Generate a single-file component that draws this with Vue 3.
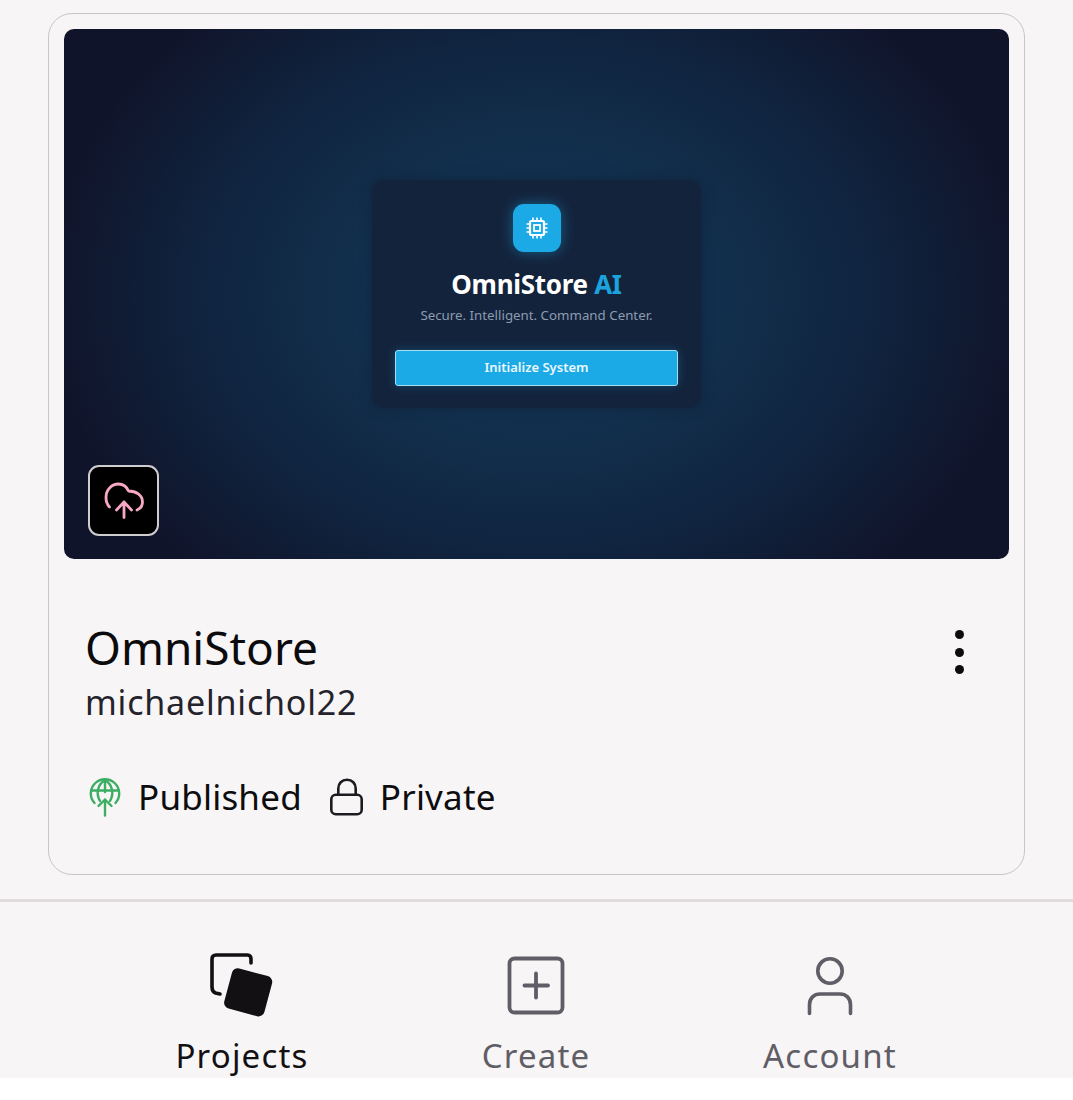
<template>
  <div class="screen">
    <main class="content">
      <section class="card">
        <div class="preview">
          <div class="panel">
            <div class="chip">
              <svg width="24" height="24" viewBox="0 0 24 24" fill="none" stroke="#fff" stroke-width="2.2">
                <rect x="5" y="5" width="14" height="14" rx="1.500" />
                <rect x="9" y="9" width="6" height="6" stroke-width="1.800" />
                <path d="M8 1.500v3M12 1.500v3M16 1.500v3M8 19.500v3M12 19.500v3M16 19.500v3M1.500 8h3M1.500 12h3M1.500 16h3M19.500 8h3M19.500 12h3M19.500 16h3" stroke-width="1.600" />
              </svg>
            </div>
            <h2 class="panel-title">OmniStore <span>AI</span></h2>
            <p class="panel-sub">Secure. Intelligent. Command Center.</p>
            <div class="panel-btn">Initialize System</div>
          </div>
          <button class="upload">
            <svg width="40" height="40" viewBox="0 0 40 40" fill="none" stroke="#f7a8c4" stroke-width="2.800" stroke-linecap="round" stroke-linejoin="round">
              <path d="M5.500 26C3 23.500 2 20 2 16.500C2 8.500 8 3 14.500 3C19 3 22.500 5.500 24.500 10C32 10 38.500 14 38.500 21C38.500 24.500 36.500 27.500 33 29" />
              <path d="M20 36.500V21M12.500 29L20 21L27.500 29" />
            </svg>
          </button>
        </div>

        <div class="info">
          <div class="info-text">
            <h1 class="name">OmniStore</h1>
            <p class="owner">michaelnichol22</p>
          </div>
          <button class="more" aria-label="More">
            <i></i><i></i><i></i>
          </button>
        </div>

        <div class="status">
          <div class="status-item">
            <svg width="36" height="40" viewBox="0 0 36 40" fill="none" stroke="#3cae63" stroke-width="2.400" stroke-linecap="round" stroke-linejoin="round">
              <path d="M7.500 26A14.200 14.200 0 1 1 28.500 26" />
              <path d="M4.500 13.500H31.500M13 24C9 17 10 8 18 3C26 8 27 17 23 24M18 3V15" />
              <path d="M18 38.500V22.500M11.500 29L18 22.500L24.500 29" />
            </svg>
            <span>Published</span>
          </div>
          <div class="status-item">
            <svg width="36" height="40" viewBox="0 0 36 40" fill="none" stroke="#1c1b1f" stroke-width="2.600" stroke-linejoin="round">
              <rect x="2.300" y="17.800" width="30.400" height="19.400" rx="4.500" />
              <path d="M9.300 17.800V11.500C9.300 6.500 12.800 2.800 18 2.800C23.200 2.800 26.700 6.500 26.700 11.500V17.800" />
            </svg>
            <span>Private</span>
          </div>
        </div>
      </section>
    </main>

    <nav class="tabs">
      <div v-for="tab in tabs" :key="tab.label" class="tab" :class="{ active: tab.active }">
        <svg v-if="tab.icon === 'projects'" width="66" height="66" viewBox="0 0 66 66" fill="none">
          <path d="M42 10V6C42 3.500 41 2 38.500 2H7C4.500 2 3 3.500 3 6V34C3 37 4 39 6.500 40L11 41" stroke="#121013" stroke-width="3.600" stroke-linecap="round" stroke-linejoin="round" />
          <rect x="18.500" y="18.500" width="41.500" height="41.500" rx="6" transform="rotate(15 39 39)" fill="#121013" />
        </svg>
        <svg v-else-if="tab.icon === 'create'" width="66" height="66" viewBox="0 0 66 66" fill="none" stroke="#5f5d66" stroke-width="3.800" stroke-linecap="round">
          <rect x="6.500" y="5.500" width="53" height="54" rx="5" />
          <path d="M33 20.500V44.500M21.500 32.500H45" />
        </svg>
        <svg v-else width="66" height="66" viewBox="0 0 66 66" fill="none" stroke="#5f5d66" stroke-width="3.600" stroke-linecap="round">
          <circle cx="33" cy="18" r="12.200" />
          <path d="M12.500 60.500V52C12.500 45 17 41 23 41H43C49 41 53.500 45 53.500 52V60.500" />
        </svg>
        <span class="tab-label">{{ tab.label }}</span>
      </div>
    </nav>
  </div>
</template>

<script setup>
const tabs = [
  { label: "Projects", icon: "projects", active: true },
  { label: "Create", icon: "create", active: false },
  { label: "Account", icon: "account", active: false },
];
</script>

<style scoped>
.screen {
  height: 1078px;
  overflow: hidden;
  background: #f8f5f6;
  font-family: "Noto Sans", "Roboto", sans-serif;
}

.content {
  height: 899px;
  padding: 13px 48px 0;
  box-sizing: border-box;
}

.card {
  height: 862px;
  box-sizing: border-box;
  padding: 15px;
  border: 1px solid #c9c5c7;
  border-radius: 24px;
}

.preview {
  position: relative;
  height: 530px;
  display: flex;
  justify-content: center;
  padding-top: 151px;
  box-sizing: border-box;
  border-radius: 10px;
  background: radial-gradient(ellipse 52% 72% at 50% 50%, #13344f 0%, #12304e 35%, #10243f 68%, #10182f 92%, #10142b 100%);
  background-color: #10142b;
}

.panel {
  width: 329px;
  height: 228px;
  box-sizing: border-box;
  padding-top: 24px;
  border-radius: 12px;
  background: #14233c;
  box-shadow: 0 0 12px rgba(16, 26, 48, 0.5);
  display: flex;
  flex-direction: column;
  align-items: center;
}

.chip {
  width: 48px;
  height: 48px;
  border-radius: 11px;
  background: #1baae6;
  box-shadow: 0 0 14px rgba(27, 170, 230, 0.45);
  display: flex;
  align-items: center;
  justify-content: center;
}

.panel-title {
  margin: 14px 0 0;
  font-size: 26px;
  line-height: 36px;
  font-weight: 700;
  letter-spacing: -0.3px;
  color: #fff;
}

.panel-title span {
  color: #1ba3de;
}

.panel-sub {
  margin: 3px 0 0;
  font-size: 13.3px;
  line-height: 20px;
  color: #8c9bb0;
}

.panel-btn {
  width: 283px;
  height: 36px;
  margin-top: 25px;
  box-sizing: border-box;
  border: 1px solid #a5def5;
  border-radius: 3px;
  background: #1baae6;
  box-shadow: 0 0 10px rgba(27, 170, 230, 0.3);
  color: #eaf8fe;
  font-size: 13px;
  font-weight: 600;
  line-height: 33px;
  text-align: center;
}

.upload {
  position: absolute;
  left: 24px;
  bottom: 23px;
  width: 71px;
  height: 71px;
  padding: 0;
  border: 2px solid #cfcdd0;
  border-radius: 11px;
  background: #000;
  display: flex;
  align-items: center;
  justify-content: center;
}

.info {
  display: flex;
  justify-content: space-between;
  padding: 58px 30px 0 21px;
}

.name {
  margin: 0;
  font-size: 46px;
  line-height: 60px;
  font-weight: 400;
  color: #0b0a0c;
}

.owner {
  margin: 2px 0 0;
  font-size: 34px;
  line-height: 46px;
  letter-spacing: 0.8px;
  color: #24222a;
}

.more {
  width: 40px;
  height: 44px;
  margin-top: 13px;
  padding: 0;
  border: 0;
  background: none;
  display: flex;
  flex-direction: column;
  align-items: center;
  justify-content: space-between;
}

.more i {
  width: 9px;
  height: 9px;
  border-radius: 50%;
  background: #0c0b0d;
}

.status {
  display: flex;
  gap: 27px;
  margin-top: 52px;
  padding-left: 23px;
}

.status-item {
  display: flex;
  align-items: center;
  gap: 15px;
  font-size: 35px;
  line-height: 40px;
  letter-spacing: 0.2px;
  color: #0d0c0e;
}

.tabs {
  height: 179px;
  box-sizing: border-box;
  padding: 51px 95px 0;
  border-top: 3px solid #e0dcdb;
  display: grid;
  grid-template-columns: repeat(3, 294px);
}

.tab {
  display: flex;
  flex-direction: column;
  align-items: center;
  gap: 15px;
  color: #5f5d66;
}

.tab.active {
  color: #121013;
}

.tab-label {
  font-size: 33px;
  line-height: 44px;
  letter-spacing: 1.2px;
}
</style>
